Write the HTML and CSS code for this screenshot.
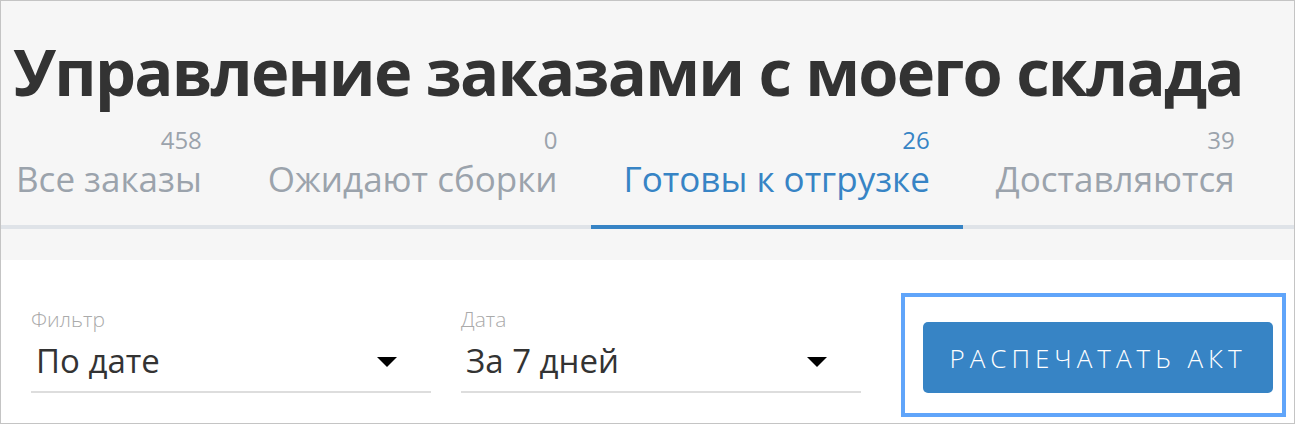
FILE: index.html
```html
<!DOCTYPE html>
<html lang="ru">
<head>
<meta charset="utf-8">
<title>Управление заказами</title>
<link rel="stylesheet" href="styles.css">
</head>
<body>
<div class="frame">
  <header class="top">
    <h1 class="title">Управление заказами с моего склада</h1>
    <nav class="tabs">
      <div class="tab"><span class="count">458</span><span class="label">Все заказы</span></div>
      <div class="tab"><span class="count">0</span><span class="label">Ожидают сборки</span></div>
      <div class="tab active"><span class="count">26</span><span class="label">Готовы к отгрузке</span></div>
      <div class="tab"><span class="count">39</span><span class="label">Доставляются</span></div>
    </nav>
  </header>
  <section class="filters">
    <div class="field">
      <span class="field-label">Фильтр</span>
      <div class="select"><span class="value">По дате</span><span class="caret"></span></div>
    </div>
    <div class="field">
      <span class="field-label">Дата</span>
      <div class="select"><span class="value">За 7 дней</span><span class="caret"></span></div>
    </div>
    <div class="action">
      <button class="print">РАСПЕЧАТАТЬ АКТ</button>
    </div>
  </section>
</div>
</body>
</html>
```

FILE: styles.css
```css
* { box-sizing: border-box; }
html, body { margin: 0; padding: 0; background: #fff; }
body { font-family: "Open Sans", "Noto Sans", sans-serif; }

.frame {
  width: 1295px;
  height: 424px;
  border: 1px solid #c4c4c4;
  display: flex;
  flex-direction: column;
  overflow: hidden;
}

.top {
  background: #f6f6f6;
  height: 259px;
  flex: none;
  display: flex;
  flex-direction: column;
}

.title {
  margin: 0;
  padding: 26px 0 0 12px;
  font-size: 65px;
  line-height: 88px;
  font-weight: 700;
  letter-spacing: -1.78px;
  color: #333;
  white-space: nowrap;
}

.tabs {
  display: flex;
  margin-top: 12px;
  border-bottom: 4px solid #dfe3e8;
}

.tab {
  display: flex;
  flex-direction: column;
  align-items: flex-end;
  padding: 0 33px 20px;
  margin-bottom: -4px;
  border-bottom: 4px solid transparent;
  color: #9ba3ac;
}
.tab:first-child { padding-left: 15px; }

.tab.active {
  color: #3784c5;
  border-bottom-color: #3784c5;
}

.count {
  font-size: 24px;
  line-height: 26px;
}

.label {
  font-size: 35px;
  line-height: 52px;
  white-space: nowrap;
}

.filters {
  flex: 1;
  display: flex;
  align-items: flex-start;
  padding: 0 0 0 30px;
  gap: 30px;
}

.field {
  width: 400px;
  padding-top: 47px;
  display: flex;
  flex-direction: column;
}

.field-label {
  font-size: 21px;
  line-height: 24px;
  font-weight: 300;
  color: #aaaaaa;
}

.select {
  display: flex;
  align-items: center;
  justify-content: space-between;
  padding: 10px 34px 10px 5px;
  border-bottom: 2px solid #dddddd;
}

.value {
  font-size: 33px;
  line-height: 40px;
  color: #333;
}

.caret {
  width: 0;
  height: 0;
  margin-top: 2px;
  border-left: 10px solid transparent;
  border-right: 10px solid transparent;
  border-top: 10px solid #000;
}

.action {
  margin-top: 33px;
  margin-left: 10px;
  border: 4px solid #60a5fa;
  padding: 25px 9px 20px 18px;
}

.print {
  display: block;
  width: 350px;
  height: 71px;
  border: 0;
  border-radius: 5px;
  background: #3784c5;
  color: #fff;
  font-family: "Open Sans", "Noto Sans", sans-serif;
  font-size: 26px;
  font-weight: 300;
  letter-spacing: 5px;
  padding: 0;
}
```
